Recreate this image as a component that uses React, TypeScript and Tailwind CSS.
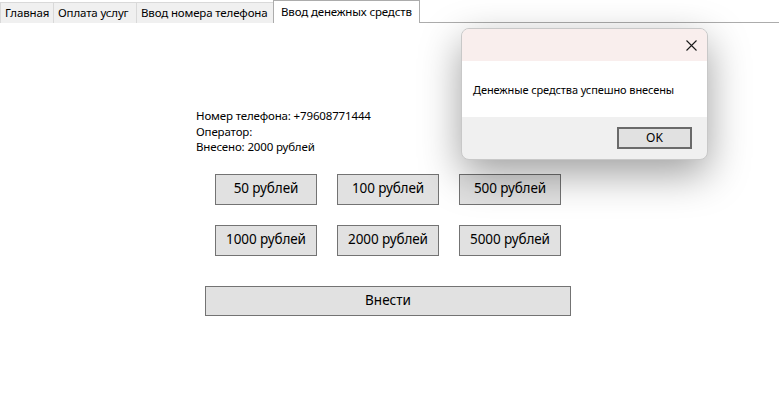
import React from "react";

const amounts = [
  ["50 рублей", "100 рублей", "500 рублей"],
  ["1000 рублей", "2000 рублей", "5000 рублей"],
];

function Tab({ label, w }: { label: string; w: string }) {
  return (
    <div
      className={`mt-[2px] h-[21px] ${w} shrink-0 whitespace-nowrap overflow-hidden bg-[#f0f0f0] border border-[#d9d9d9] border-b-0 -ml-px first:ml-0 flex items-center pl-[4px] text-[11.5px] tracking-[-0.15px] text-black`}
    >
      {label}
    </div>
  );
}

export default function App() {
  return (
    <div className="relative w-[779px] h-[409px] bg-white overflow-hidden font-['Segoe_UI','Noto_Sans',sans-serif] text-black">
      {/* Tab strip */}
      <div className="flex h-[23px] items-start">
        <Tab label="Главная" w="w-[54px]" />
        <Tab label="Оплата услуг" w="w-[84px]" />
        <Tab label="Ввод номера телефона" w="w-[139px]" />
        <div className="relative -ml-[2px] h-[23px] w-[147px] shrink-0 whitespace-nowrap bg-white border border-[#acacac] border-b-0 z-10 flex items-center pl-[7px] pb-[1px] text-[11.5px] tracking-[-0.15px]">
          Ввод денежных средств
        </div>
        <div className="flex-1 h-[23px] border-b border-[#acacac]" />
      </div>

      {/* Page content */}
      <div className="flex flex-col">
        <div className="ml-[196px] mt-[85px] text-[11.5px] tracking-[-0.15px] leading-[15.5px] whitespace-nowrap">
          <div>Номер телефона: +79608771444</div>
          <div>Оператор:</div>
          <div>Внесено: 2000 рублей</div>
        </div>

        <div className="ml-[215px] mt-[19px] flex flex-col gap-[20px]">
          {amounts.map((row, i) => (
            <div key={i} className="flex gap-[20px]">
              {row.map((a) => (
                <button
                  key={a}
                  className="w-[102px] h-[31px] bg-[#e1e1e1] border border-[#737373] text-[13.5px] tracking-[-0.1px] leading-none flex items-center justify-center whitespace-nowrap"
                >
                  {a}
                </button>
              ))}
            </div>
          ))}
        </div>

        <button className="ml-[205px] mt-[30px] w-[366px] h-[30px] bg-[#e1e1e1] border border-[#737373] text-[13.5px] leading-none flex items-center justify-center">
          Внести
        </button>
      </div>

      {/* Message box */}
      <div className="absolute left-[461px] top-[28px] w-[247px] h-[132px] rounded-[8px] border border-[#c8c8c8] bg-[#f0f0f0] overflow-hidden shadow-[0_14px_40px_rgba(0,0,0,0.38)] z-20 flex flex-col">
        <div className="h-[32px] bg-[#f9eeed] flex items-center justify-end pr-[10px]">
          <svg width="11" height="11" viewBox="0 0 11 11" className="mt-[1px]">
            <path d="M0.5 0.5 L10.5 10.5 M10.5 0.5 L0.5 10.5" stroke="#1a1a1a" strokeWidth="1.1" />
          </svg>
        </div>
        <div className="h-[56px] bg-white flex items-center pl-[11px] text-[11px] tracking-[-0.1px] pt-[2px] whitespace-nowrap">
          Денежные средства успешно внесены
        </div>
        <div className="flex-1 flex items-start justify-end pt-[10px] pr-[15px]">
          <button className="w-[75px] h-[22px] bg-[#e1e1e1] border-2 border-[#6a6a6a] text-[12px] leading-none flex items-center justify-center">
            OK
          </button>
        </div>
      </div>
    </div>
  );
}
